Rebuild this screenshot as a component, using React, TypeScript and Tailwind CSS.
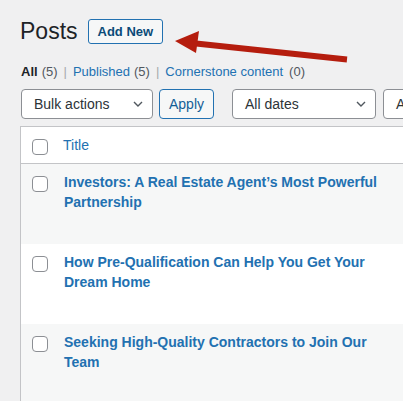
import React from 'react';

interface Post {
  title: string;
}

const posts: Post[] = [
  { title: 'Investors: A Real Estate Agent’s Most Powerful Partnership' },
  { title: 'How Pre-Qualification Can Help You Get Your Dream Home' },
  { title: 'Seeking High-Quality Contractors to Join Our Team' },
];

function Checkbox() {
  return (
    <span className="block w-4 h-4 rounded-[4px] border border-[#8c8f94] bg-white" />
  );
}

function Chevron() {
  return (
    <svg width="10" height="6" viewBox="0 0 10 6" fill="none">
      <path d="M1 1l4 4 4-4" stroke="#50575e" strokeWidth="1.4" />
    </svg>
  );
}

interface SelectProps {
  label: string;
  width: string;
}

function FakeSelect({ label, width }: SelectProps) {
  return (
    <div
      className={`${width} shrink-0 h-[30px] flex items-center justify-between pl-3 pr-[9px] bg-white border border-[#8c8f94] rounded-[4px] text-[14px] text-[#2c3338]`}
    >
      <span>{label}</span>
      <Chevron />
    </div>
  );
}

function Arrow() {
  return (
    <svg
      className="absolute left-0 top-0 pointer-events-none"
      width="403"
      height="100"
      viewBox="0 0 403 100"
    >
      <line x1="196" y1="43.5" x2="347" y2="59.5" stroke="#b51d0e" strokeWidth="6" />
      <polygon points="175,41 199,31 196,53" fill="#b51d0e" />
    </svg>
  );
}

export default function App() {
  return (
    <div className="relative w-[403px] h-[401px] overflow-hidden bg-[#f0f0f1] font-['Liberation_Sans',Arial,sans-serif]">
      <div className="pl-5 pt-[19px]">
        <div className="flex items-center h-[25px]">
          <h1 className="text-[23px] leading-[25px] text-[#1d2327]">Posts</h1>
          <button className="ml-[10px] h-[25px] px-[9px] border border-[#2271b1] rounded-[3px] bg-[#f6f7f7] text-[13px] font-bold text-[#0a4b78]">
            Add New
          </button>
        </div>

        <div className="mt-[19px] h-[18px] flex items-center text-[13px] leading-[18px] text-[#50575e] whitespace-nowrap">
          <span className="font-bold text-[#1d2327] ml-[1px]">All</span>
          <span className="ml-1">(5)</span>
          <span className="mx-[6px] text-[#a7aaad]">|</span>
          <span className="text-[#2271b1]">Published</span>
          <span className="ml-1">(5)</span>
          <span className="mx-[6px] text-[#a7aaad]">|</span>
          <span className="text-[#2271b1]">Cornerstone content</span>
          <span className="ml-[6px]">(0)</span>
        </div>

        <div className="mt-2 flex items-center pl-[1px]">
          <FakeSelect label="Bulk actions" width="w-[132px]" />
          <button className="ml-[6px] shrink-0 h-[30px] w-[55px] border border-[#2271b1] rounded-[4px] bg-[#f6f7f7] text-[14px] text-[#135e96]">
            Apply
          </button>
          <div className="ml-[18px]">
            <FakeSelect label="All dates" width="w-[144px]" />
          </div>
          <div className="ml-[7px]">
            <FakeSelect label="All Categories" width="w-[160px]" />
          </div>
        </div>

        <div className="mt-[7px] w-[520px] border border-[#c3c4c7] bg-white">
          <div className="flex h-[37px] border-b border-[#c3c4c7]">
            <div className="w-[42px] shrink-0 pl-[11px] pt-3">
              <Checkbox />
            </div>
            <div className="pt-[8px] text-[14px] leading-[20px] text-[#2271b1]">Title</div>
          </div>
          {posts.map((post, i) => (
            <div
              key={post.title}
              className={`flex h-[80px] ${i % 2 === 0 ? 'bg-[#f6f7f7]' : 'bg-white'}`}
            >
              <div className="w-[42px] shrink-0 pl-[11px] pt-3">
                <Checkbox />
              </div>
              <div className="w-[340px] pl-[1px] pt-[8px] text-[14px] leading-[20px] font-bold text-[#2271b1]">
                {post.title}
              </div>
            </div>
          ))}
        </div>
      </div>
      <Arrow />
    </div>
  );
}
